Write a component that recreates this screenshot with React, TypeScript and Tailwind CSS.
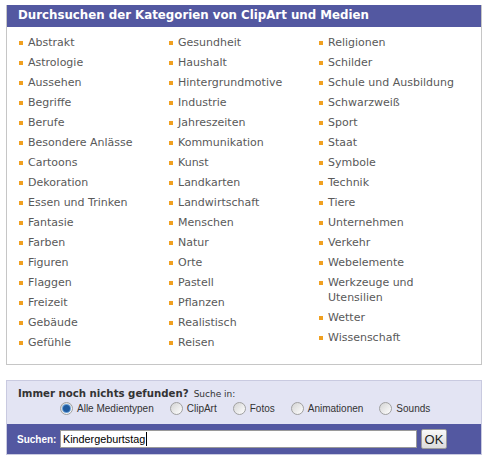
import React from "react"

const col1 = [
  "Abstrakt", "Astrologie", "Aussehen", "Begriffe", "Berufe", "Besondere Anlässe", "Cartoons", "Dekoration",
  "Essen und Trinken", "Fantasie", "Farben", "Figuren", "Flaggen", "Freizeit", "Gebäude", "Gefühle",
]
const col2 = [
  "Gesundheit", "Haushalt", "Hintergrundmotive", "Industrie", "Jahreszeiten", "Kommunikation", "Kunst", "Landkarten",
  "Landwirtschaft", "Menschen", "Natur", "Orte", "Pastell", "Pflanzen", "Realistisch", "Reisen",
]
const col3 = [
  "Religionen", "Schilder", "Schule und Ausbildung", "Schwarzweiß", "Sport", "Staat", "Symbole", "Technik",
  "Tiere", "Unternehmen", "Verkehr", "Webelemente", "Werkzeuge und Utensilien", "Wetter", "Wissenschaft",
]

const mediaTypes = ["Alle Medientypen", "ClipArt", "Fotos", "Animationen", "Sounds"]

function CategoryList({ items, last }: { items: string[]; last?: boolean }) {
  return (
    <ul className={`flex flex-col gap-[5px] ${last ? "w-[135px]" : "w-[150px]"}`}>
      {items.map((item) => (
        <li key={item} className="flex items-start gap-[5px] text-[11px] leading-[15px] text-[#595959]">
          <span className="mt-[6px] h-[4px] w-[4px] shrink-0 bg-[#f0a020]" />
          <a href="#" className="hover:underline">{item}</a>
        </li>
      ))}
    </ul>
  )
}

function Radio({ checked }: { checked?: boolean }) {
  return (
    <span className="relative inline-flex h-[13px] w-[13px] shrink-0 items-center justify-center rounded-full border border-[#a0a0a0] bg-gradient-to-br from-[#d4d4d4] to-[#ffffff]">
      {checked && <span className="h-[7px] w-[7px] rounded-full bg-[#1f5a9f] shadow-[0_0_0_1px_#6aa0d8]" />}
    </span>
  )
}

export default function App() {
  return (
    <div className="h-[461px] w-[487px] bg-white pl-[6px] pt-[5px]" style={{ fontFamily: '"DejaVu Sans", Verdana, sans-serif' }}>
      {/* Categories */}
      <div className="w-[476px] border border-t-0 border-[#c6c6c6]">
        <div className="flex h-[22px] items-center bg-[#5358a1] pl-[11px] text-[11.8px] font-bold text-white">
          Durchsuchen der Kategorien von ClipArt und Medien
        </div>
        <div className="flex pb-[14px] pl-[12px] pt-[8px]">
          <CategoryList items={col1} />
          <CategoryList items={col2} />
          <CategoryList items={col3} last />
        </div>
      </div>

      {/* Search */}
      <div className="mt-[15px] w-[476px] border border-[#c9cae0] bg-[#e3e4f3]">
        <div className="mt-[4px] flex h-[15px] items-baseline gap-[5px] pl-[11px] pt-[1px] text-[#333333]">
          <span className="text-[10.2px] font-bold">Immer noch nichts gefunden?</span>
          <span className="text-[9px]">Suche in:</span>
        </div>
        <div
          className="flex h-[17px] items-center whitespace-nowrap pl-[53px] text-[10px] text-[#333333]"
          style={{ fontFamily: '"Liberation Sans", Arial, sans-serif' }}
        >
          {mediaTypes.map((m, i) => (
            <label key={m} className="mr-[16px] flex items-center gap-[4px]">
              <Radio checked={i === 0} />
              <span>{m}</span>
            </label>
          ))}
        </div>
        <div className="mt-[7px] flex h-[30px] items-center bg-[#5358a1] pl-[10px]">
          <span
            className="w-[43px] text-[10px] font-bold text-white"
            style={{ fontFamily: '"Liberation Sans", Arial, sans-serif' }}
          >
            Suchen:
          </span>
          <div
            className="flex h-[18px] w-[357px] items-center border border-[#9a9a9a] bg-white pl-[2px] text-[10.8px] text-black"
            style={{ fontFamily: '"Liberation Sans", Arial, sans-serif' }}
          >
            Kindergeburtstag<span className="ml-[1px] h-[14px] w-px bg-black" />
          </div>
          <button
            className="ml-[4px] h-[20px] w-[26px] rounded-[2px] border border-[#9c9c9c] bg-gradient-to-b from-[#f8f8f8] to-[#dcdcdc] text-[13px] text-[#222222]"
            style={{ fontFamily: '"Liberation Sans", Arial, sans-serif' }}
          >
            OK
          </button>
        </div>
      </div>
    </div>
  )
}
